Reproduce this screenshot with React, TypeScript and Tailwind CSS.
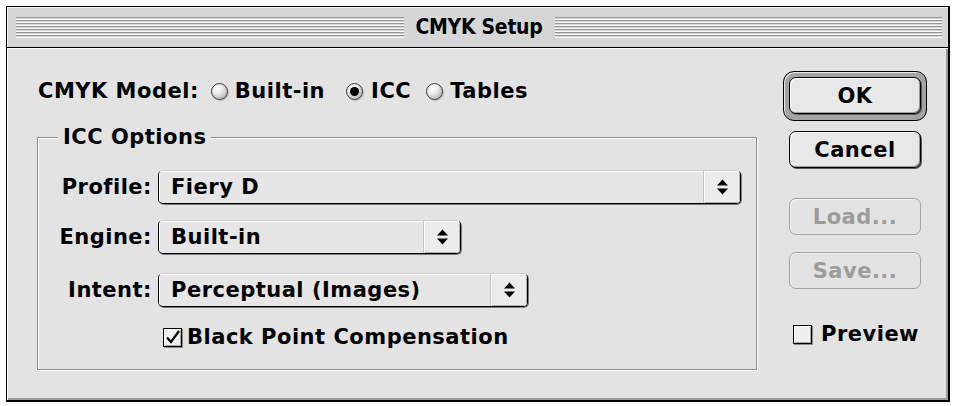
import React from "react";

const font = "font-['DejaVu_Sans',sans-serif] font-bold tracking-[0.5px]";

function Stripes() {
  return (
    <div className="flex-1 flex flex-col">
      {[0, 1, 2, 3, 4, 5, 6].map((i) => (
        <div
          key={i}
          className="h-[3px] border-t border-t-[#959595] border-b border-b-[#fbfbfb]"
        />
      ))}
    </div>
  );
}

function Radio({ checked }: { checked?: boolean }) {
  return (
    <span className="w-[17px] h-[17px] rounded-full border border-[#3c3c3c] bg-[radial-gradient(circle_at_38%_32%,#ffffff_0%,#ececec_35%,#b4b4b4_80%,#8c8c8c_100%)] shadow-[1px_1px_0_#b8b8b8] flex items-center justify-center shrink-0">
      {checked && <span className="w-[9px] h-[9px] rounded-full bg-black" />}
    </span>
  );
}

function Check({ checked }: { checked?: boolean }) {
  return (
    <span className="w-[19px] h-[19px] border border-black bg-[#f0f0f0] shadow-[inset_1px_1px_0_#ffffff,inset_-1px_-1px_0_#a8a8a8,1px_1px_0_#8a8a8a] flex items-center justify-center shrink-0">
      {checked && (
        <svg width="17" height="17" viewBox="0 0 17 17">
          <path d="M3 8.5 L7 13 L15 2" fill="none" stroke="#000" strokeWidth="2.2" />
        </svg>
      )}
    </span>
  );
}

function Arrows() {
  return (
    <svg width="11" height="16" viewBox="0 0 11 16">
      <polygon points="0,6.5 5.5,0.5 11,6.5" fill="#000" />
      <polygon points="0,9.5 5.5,15.5 11,9.5" fill="#000" />
    </svg>
  );
}

function Popup({ cls, text }: { cls: string; text: string }) {
  return (
    <div
      className={`${cls} h-[34px] flex rounded-[5px] border border-black border-t-[#cfcfcf] bg-[#e6e6e6] shadow-[1px_1px_0_#7a7a7a] overflow-hidden`}
    >
      <div className="flex-1 flex items-center pl-[12px] leading-[24px] shadow-[inset_1px_1px_0_#ffffff]">
        {text}
      </div>
      <div className="w-[37px] flex items-center justify-center border-l border-[#c4c4c4] bg-[#ececec] shadow-[inset_1px_1px_0_#ffffff,inset_-1px_-1px_0_#b0b0b0]">
        <Arrows />
      </div>
    </div>
  );
}

function Btn({ children, disabled }: { children: React.ReactNode; disabled?: boolean }) {
  return (
    <div
      className={`w-[132px] h-[37px] rounded-[7px] border flex items-center justify-center leading-[24px] ${
        disabled
          ? "border-[#a3a3a3] text-[#9c9c9c] bg-[#e3e3e3] shadow-[inset_1px_1px_0_#f4f4f4]"
          : "border-black bg-[#e8e8e8] shadow-[inset_1px_1px_0_#ffffff,inset_-1px_-1px_0_#9a9a9a,1px_1px_0_#5a5a5a]"
      }`}
    >
      {children}
    </div>
  );
}

export default function App() {
  return (
    <div className={`w-[954px] h-[406px] bg-white pl-[6px] pt-[6px] ${font} text-[21px] text-black`}>
      <div className="w-[944px] h-[396px] flex flex-col border-l border-t border-r-2 border-b-2 border-black">
        {/* Title bar */}
        <div className="h-[41px] flex items-center pl-[9px] pr-[6px] bg-[#d6d6d6] border-b border-black shadow-[inset_1px_1px_0_#f2f2f2]">
          <Stripes />
          <div className="px-[12px] font-['DejaVu_Sans_Condensed','DejaVu_Sans',sans-serif] font-stretch-condensed font-bold text-[21px] tracking-[-0.3px] leading-[24px]">
            CMYK Setup
          </div>
          <Stripes />
        </div>

        {/* Content */}
        <div className="flex-1 flex bg-[#e3e3e3] shadow-[inset_1px_1px_0_#ffffff,inset_-2px_-2px_0_#9c9c9c]">
          {/* Left column */}
          <div className="w-[750px] pl-[30px] pt-[31px] flex flex-col">
            <div className="flex items-center h-[24px] pl-[1px] leading-[24px]">
              <span>CMYK Model:</span>
              <span className="ml-[12px] flex items-center gap-[7px]">
                <Radio />
                <span>Built-in</span>
              </span>
              <span className="ml-[21px] flex items-center gap-[8px]">
                <Radio checked />
                <span>ICC</span>
              </span>
              <span className="ml-[15px] flex items-center gap-[7px]">
                <Radio />
                <span>Tables</span>
              </span>
            </div>

            <fieldset className="mt-[22px] border border-[#8e8e8e] shadow-[inset_1px_1px_0_#ffffff,1px_1px_0_#ffffff] pb-[20px]">
              <legend className="ml-[20px] px-[5px] leading-[24px] bg-[#e3e3e3]">ICC Options</legend>
              <div className="pt-[21px] flex flex-col">
                <div className="flex items-center">
                  <span className="w-[114px] text-right leading-[24px]">Profile:</span>
                  <div className="ml-[6px]">
                    <Popup cls="w-[583px]" text="Fiery D" />
                  </div>
                </div>
                <div className="flex items-center mt-[16px]">
                  <span className="w-[114px] text-right leading-[24px]">Engine:</span>
                  <div className="ml-[6px]">
                    <Popup cls="w-[303px]" text="Built-in" />
                  </div>
                </div>
                <div className="flex items-center mt-[19px]">
                  <span className="w-[114px] text-right leading-[24px]">Intent:</span>
                  <div className="ml-[6px]">
                    <Popup cls="w-[370px]" text="Perceptual (Images)" />
                  </div>
                </div>
                <div className="flex items-center mt-[18px] ml-[125px] h-[24px] gap-[5px] leading-[24px]">
                  <Check checked />
                  <span>Black Point Compensation</span>
                </div>
              </div>
            </fieldset>
          </div>

          {/* Right column */}
          <div className="ml-[26px] w-[144px] pt-[23px] flex flex-col items-center">
            <div className="w-[144px] h-[50px] rounded-[11px] border border-black bg-[#a4a4a4] shadow-[inset_1px_1px_0_#e8e8e8] p-[5px] flex">
              <Btn>OK</Btn>
            </div>
            <div className="mt-[10px]">
              <Btn>Cancel</Btn>
            </div>
            <div className="mt-[30px]">
              <Btn disabled>Load...</Btn>
            </div>
            <div className="mt-[17px]">
              <Btn disabled>Save...</Btn>
            </div>
            <div className="mt-[33px] self-start ml-[10px] flex items-center h-[24px] gap-[9px] leading-[24px]">
              <Check />
              <span>Preview</span>
            </div>
          </div>
        </div>
      </div>
    </div>
  );
}
